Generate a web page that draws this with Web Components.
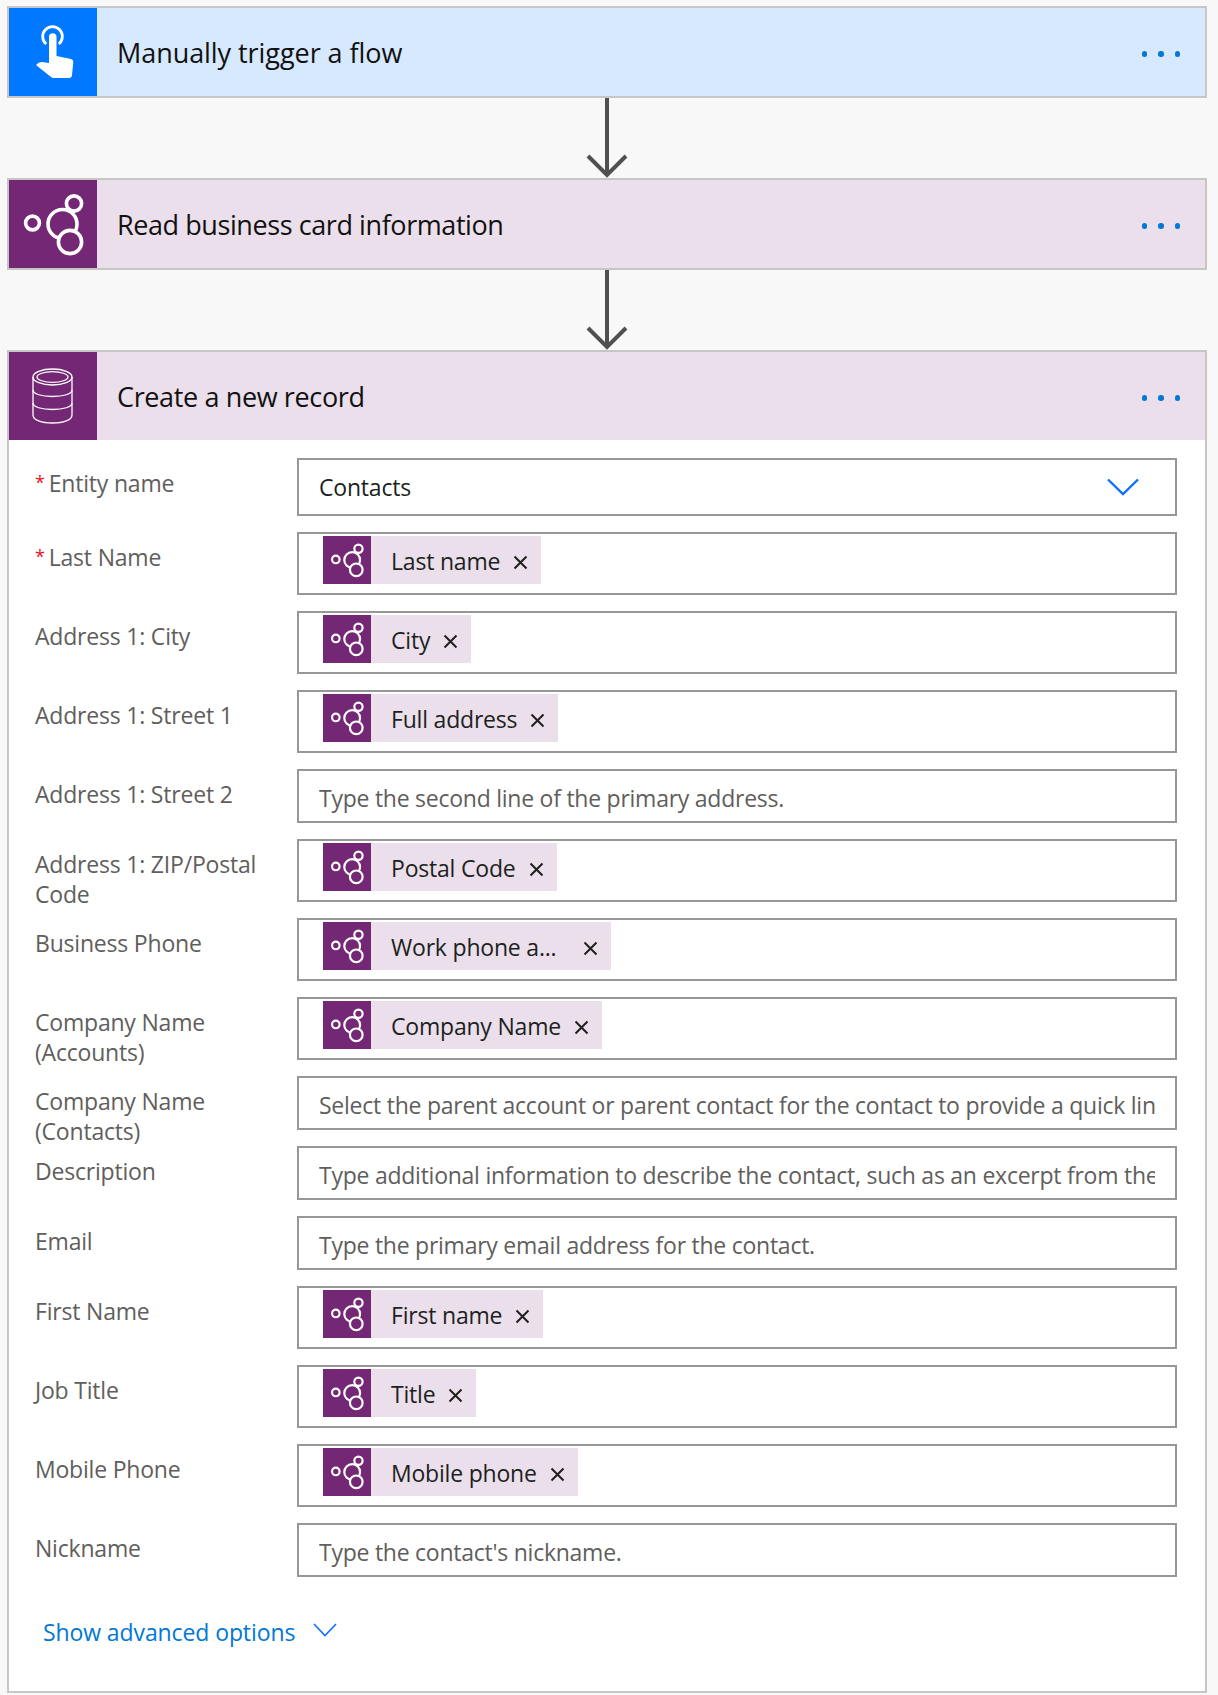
<!doctype html>
<html><head><meta charset="utf-8">
<style>
html,body{margin:0;padding:0;background:#f8f8f8}
body{font-family:"Open Sans","Noto Sans",sans-serif;width:1218px;height:1695px;overflow:hidden}
</style></head><body>
<flow-canvas>
  <flow-card kind="touch" title-text="Manually trigger a flow" tone="blue" style="--ls:-.06px"></flow-card>
  <flow-arrow></flow-arrow>
  <flow-card kind="hub" title-text="Read business card information" style="--ls:-.42px"></flow-card>
  <flow-arrow></flow-arrow>
  <flow-card kind="db" title-text="Create a new record" style="--ls:-.37px">
    <form-row label="Entity name" req h="58" style="--gap:0px"><select-box>Contacts</select-box></form-row>
    <form-row label="Last Name" req h="63"><token-box><data-token>Last name</data-token></token-box></form-row>
    <form-row label="Address 1: City" h="63"><token-box><data-token>City</data-token></token-box></form-row>
    <form-row label="Address 1: Street 1" h="63"><token-box><data-token>Full address</data-token></token-box></form-row>
    <form-row label="Address 1: Street 2" h="54"><hint-box>Type the second line of the primary address.</hint-box></form-row>
    <form-row label="Address 1: ZIP/Postal Code" h="63"><token-box><data-token>Postal Code</data-token></token-box></form-row>
    <form-row label="Business Phone" h="63"><token-box><data-token trunc>Work phone a...</data-token></token-box></form-row>
    <form-row label="Company Name (Accounts)" h="63"><token-box><data-token>Company Name</data-token></token-box></form-row>
    <form-row label="Company Name (Contacts)" h="54"><hint-box>Select the parent account or parent contact for the contact to provide a quick link to additional details.</hint-box></form-row>
    <form-row label="Description" h="54"><hint-box>Type additional information to describe the contact, such as an excerpt from the company's website.</hint-box></form-row>
    <form-row label="Email" h="54"><hint-box>Type the primary email address for the contact.</hint-box></form-row>
    <form-row label="First Name" h="63"><token-box><data-token>First name</data-token></token-box></form-row>
    <form-row label="Job Title" h="63"><token-box><data-token>Title</data-token></token-box></form-row>
    <form-row label="Mobile Phone" h="63"><token-box><data-token>Mobile phone</data-token></token-box></form-row>
    <form-row label="Nickname" h="54"><hint-box>Type the contact's nickname.</hint-box></form-row>
    <advanced-link>Show advanced options</advanced-link>
  </flow-card>
</flow-canvas>
<script>
const HUB=(bg,s)=>`<circle cx="23.5" cy="43" r="6.9" fill="none" stroke="#fff" stroke-width="${s}"/>
<circle cx="53.5" cy="44" r="14.5" fill="none" stroke="#fff" stroke-width="${s}"/>
<circle cx="65" cy="23.5" r="7.6" fill="${bg}" stroke="#fff" stroke-width="${s}"/>
<circle cx="61" cy="62" r="11.6" fill="${bg}" stroke="#fff" stroke-width="${s}"/>`;
const ICONS={
 hub:`<svg width="88" height="88" viewBox="0 0 88 88">${HUB('#742774',3.6)}</svg>`,
 touch:`<svg width="88" height="88" viewBox="0 0 88 88"><path d="M37.200 36A9.800 9.800 0 1 1 49.800 36" fill="none" stroke="#fff" stroke-width="2.800"/>
 <path d="M40 29a3.750 3.750 0 0 1 7.500 0V48L62 51q2.300.5 2.300 3L63 67q-.2 3-3 3H45q-2 0-3-1L27.500 57.500q-.5-1 .5-1.500q2-2 5-2L40 55z" fill="#fff"/></svg>`,
 db:`<svg width="88" height="88" viewBox="0 0 88 88" fill="none" stroke="#fff" stroke-width="1.300"><ellipse cx="43.500" cy="25" rx="19.500" ry="8"/><ellipse cx="43.500" cy="25" rx="15.500" ry="5.300"/><path d="M24 25v38c0 5 8.700 8 19.500 8S63 68 63 63V25"/><path d="M24 38c0 4 8.700 6.500 19.500 6.500S63 42 63 38"/><path d="M24 51c0 4 8.700 6.500 19.500 6.500S63 55 63 51"/></svg>`
};
function def(name,css,html){customElements.define(name,class extends HTMLElement{
  constructor(){super();this.attachShadow({mode:'open'})}
  connectedCallback(){this.shadowRoot.innerHTML=`<style>${css}</style>`+(typeof html==='function'?html(this):html)}
})}
def('flow-canvas',`:host{display:block;padding:6px 11px 0 7px;box-sizing:border-box;width:1218px}`,`<slot></slot>`);
def('flow-arrow',`:host{display:flex;justify-content:center;height:80px}svg{display:block}`,
 `<svg width="42" height="80" viewBox="0 0 42 80" fill="none" stroke="#505050" stroke-width="4"><path d="M21 0V77"/><path d="M2 58L21 77L40 58"/></svg>`);
def('flow-card',`:host{display:block;border:2px solid #c8c6c4;background:#fff;box-sizing:border-box}
 .h{display:flex;align-items:center;height:88px;background:#ebdfeb}
 :host([tone=blue]) .h{background:#d7e9ff}
 .i{width:88px;height:88px;background:#742774;flex:none}
 :host([tone=blue]) .i{background:#0078ff}
 .i svg{display:block}
 .t{flex:1;margin-left:20px;font-size:27px;color:#111;white-space:nowrap;letter-spacing:var(--ls,-.2px)}
 .d{display:flex;gap:11px;margin:4px 25px 0 0}
 .d i{width:5.500px;height:5.500px;border-radius:50%;background:#0078d4;display:block}
 .b{padding:18px 28px 0 26px}`,
 h=>`<div class="h"><div class="i">${ICONS[h.getAttribute('kind')]}</div><div class="t">${h.getAttribute('title-text')}</div><div class="d"><i></i><i></i><i></i></div></div>`+(h.children.length?`<div class="b" style="height:1251px;box-sizing:border-box"><slot></slot></div>`:``));
def('form-row',`:host{display:grid;grid-template-columns:262px minmax(0,1fr);margin-top:var(--gap,16px)}
 .l{font-size:23px;letter-spacing:-.2px;line-height:30px;color:#605e5c;padding:10px 10px 0 0;height:0}
 .l b{color:#e81123;font-weight:400;font-size:18px;margin-right:4px;vertical-align:3px;line-height:0}`,
 h=>`<div class="l">${h.hasAttribute('req')?'<b>*</b>':''}${h.getAttribute('label')}</div><div style="height:${h.getAttribute('h')}px;display:flex;min-width:0"><slot></slot></div>`);
const box=`:host{display:flex;align-items:center;flex:1;min-width:0;box-sizing:border-box;border:2px solid #979797;background:#fff;overflow:hidden}`;
def('select-box',box+`.s{flex:1;padding-left:20px;font-size:23px;letter-spacing:-.2px;color:#201f1e}svg{margin-right:36px;display:block}`,
 `<div class="s"><slot></slot></div><svg width="32" height="18" viewBox="0 0 32 18" fill="none" stroke="#0f6fff" stroke-width="2.400"><path d="M1 1.500L16 16L31 1.500"/></svg>`);
def('token-box',box+`:host{padding:2px 0 0 24px;align-items:flex-start}`,`<slot></slot>`);
def('hint-box',box+`.s{margin:3px 20px 0 20px;font-size:23px;letter-spacing:-.25px;color:#605e5c;white-space:nowrap;overflow:hidden;flex:1;min-width:0}`,`<div class="s"><slot></slot></div>`);
def('data-token',`:host{display:inline-flex;align-items:center;height:48px;background:#ebdfeb;font-size:23px;letter-spacing:-.2px;color:#201f1e;white-space:nowrap}
 .i{width:48px;height:48px;background:#742774;flex:none}.i svg{display:block}
 .t{margin:2px 0 0 20px}
 .x{margin:5px 13px 0 13px;display:block;flex:none}
 :host([trunc]) .x{margin-left:27px}`,
 `<div class="i"><svg width="48" height="48" viewBox="0 0 88 88">${HUB('#742774',4)}</svg></div><div class="t"><slot></slot></div><svg class="x" width="15" height="15" viewBox="0 0 15 15" stroke="#201f1e" stroke-width="2"><path d="M1.500 1.500L13.500 13.500M13.500 1.500L1.500 13.500"/></svg>`);
def('advanced-link',`:host{display:flex;align-items:center;margin:39px 0 0 8px;font-size:23px;letter-spacing:-.1px;color:#0078d4}svg{margin:-4px 0 0 18px;display:block}`,
 `<slot></slot><svg width="24" height="14" viewBox="0 0 24 14" fill="none" stroke="#0f6fff" stroke-width="1.600"><path d="M1 1L12 12.500L23 1"/></svg>`);
</script>
</body></html>
